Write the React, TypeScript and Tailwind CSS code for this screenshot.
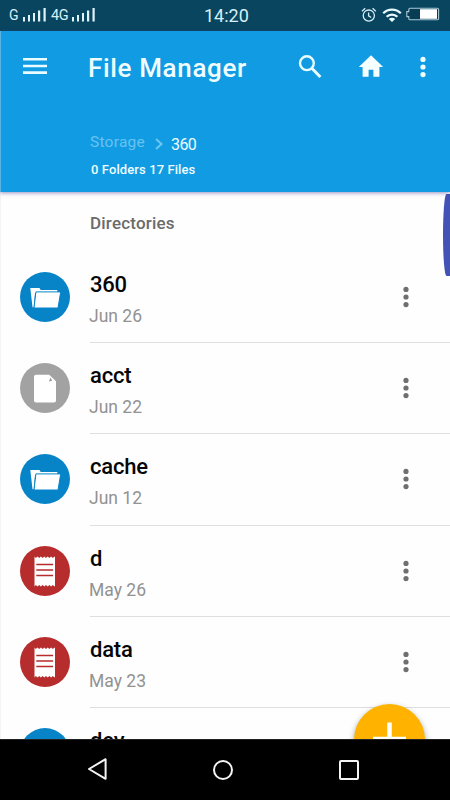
type Kind = 'folder' | 'file' | 'note';

const entries: { name: string; date?: string; kind: Kind }[] = [
  { name: '360', date: 'Jun 26', kind: 'folder' },
  { name: 'acct', date: 'Jun 22', kind: 'file' },
  { name: 'cache', date: 'Jun 12', kind: 'folder' },
  { name: 'd', date: 'May 26', kind: 'note' },
  { name: 'data', date: 'May 23', kind: 'note' },
  { name: 'dev', kind: 'folder' },
];

const circleColor: Record<Kind, string> = {
  folder: 'bg-[#0784c8]',
  file: 'bg-[#a2a2a2]',
  note: 'bg-[#b72d2d]',
};

function Glyph({ kind }: { kind: Kind }) {
  return (
    <svg viewBox="0 0 50 50" className="h-full w-full">
      {kind === 'folder' && (
        <>
          <path d="M10.3 16h9.2l1.2 2h16.6v3H15l-1.3 14.2h-1.2z" fill="#fff" />
          <path d="M15.9 19.9h24.8L38 36H14z" fill="#fff" stroke="#0784c8" strokeWidth="1" />
        </>
      )}
      {kind === 'file' && (
        <>
          <path d="M16 11.8h13.2l6.8 6.4v19.4a2 2 0 0 1-2 2H16a2 2 0 0 1-2-2V13.8a2 2 0 0 1 2-2z" fill="#fff" />
          <path d="M30.4 14.6l1.8 3.2-3.2.6z" fill="#999" />
        </>
      )}
      {kind === 'note' && (
        <>
          <path
            d="M14.5 10.6l1.3 1.3 1.7-1.3 1.7 1.3 1.7-1.3 1.7 1.3 1.7-1.3 1.7 1.3 1.7-1.3 1.7 1.3 1.7-1.3 1.7 1.3 1.7-1.3.5.4v29l-.5.6-1.7-1.6-1.7 1.6-1.7-1.6-1.7 1.6-1.7-1.6-1.7 1.6-1.7-1.6-1.7 1.6-1.7-1.6-1.7 1.6-1.7-1.6-1.3 1.6z"
            fill="#fff"
          />
          <path d="M16.3 18.5h16.8M16.3 24h16.8M16.3 29.5h16.8" stroke="#b72d2d" strokeWidth="1.5" />
        </>
      )}
    </svg>
  );
}

function Dots({ className }: { className: string }) {
  return (
    <svg viewBox="0 0 6 22" className={className} fill="currentColor">
      <circle cx="3" cy="3.4" r="2.6" />
      <circle cx="3" cy="11" r="2.6" />
      <circle cx="3" cy="18.6" r="2.6" />
    </svg>
  );
}

function Signal() {
  return (
    <svg viewBox="0 0 24 15" className="-mt-[3px] h-[15px] w-6" fill="#dff4fa">
      <rect x="0" y="10" width="2" height="4.5" />
      <rect x="5" y="8" width="2" height="6.5" />
      <rect x="10" y="6" width="2" height="8.5" />
      <rect x="15" y="3.5" width="2.2" height="11" />
      <rect x="20.5" y="1" width="2.2" height="13.5" />
    </svg>
  );
}

export default function App() {
  return (
    <div className="relative flex h-[800px] w-[450px] flex-col overflow-hidden bg-[#fefefe] font-['Roboto',sans-serif]">
      <div className="flex h-[31px] shrink-0 items-center bg-[#09455f] text-[#d5f0f8]">
        <div className="flex w-[204px] items-center pl-[9px]">
          <span className="w-[14px] text-[14px]">G</span>
          <Signal />
          <span className="ml-[4px] w-[21px] text-[14.5px] tracking-[-0.5px]">4G</span>
          <Signal />
        </div>
        <span className="w-[157px] -mt-px text-[18px]">14:20</span>
        <svg viewBox="0 0 16 16" className="-mt-[2px] h-4 w-4" fill="none" stroke="#d5f0f8" strokeWidth="1.3">
          <circle cx="7.8" cy="8.6" r="5.6" />
          <path d="M7.6 5.4v3.5l2.6 1.6M1 4.2 4.2 1.2M11.6 1.2l3.2 3" />
        </svg>
        <svg viewBox="0 0 20 14" className="-mt-[2px] ml-[5px] h-[14px] w-5" fill="none" stroke="#e8faff" strokeWidth="2.2">
          <path d="M1.2 5.2a12.4 12.4 0 0 1 17.6 0M4.6 8.8a7.6 7.6 0 0 1 10.8 0" />
          <path d="M10 14 6.8 11a4.6 4.6 0 0 1 6.4 0z" fill="#e8faff" stroke="none" />
        </svg>
        <svg viewBox="0 0 34 14" className="-mt-[3px] ml-1 h-[14px] w-[34px]">
          <path d="M4.2 1.2h27a1.4 1.4 0 0 1 1.4 1.4v8.8a1.4 1.4 0 0 1-1.4 1.4h-27a1.4 1.4 0 0 1-1.4-1.4V9.6H.8V4.6h2V2.6a1.4 1.4 0 0 1 1.4-1.4z" fill="#083b54" stroke="#a9c9d5" strokeWidth="1.1" />
          <rect x="14" y="2.2" width="17" height="9.6" fill="#fff" />
        </svg>
      </div>

      <header className="z-10 h-[161px] shrink-0 border-l border-[#57b4e5] bg-[#109be3] text-[#effdff] shadow-[0_1px_4px_rgba(60,60,150,0.55)]">
        <div className="flex h-[71px] items-center">
          <svg viewBox="0 0 24 18" className="-mt-px ml-[22px] h-[18px] w-6" fill="#e9fcff">
            <path d="M0 1h24v2.6H0zM0 7.7h24v2.6H0zM0 14.3h24v2.6H0z" />
          </svg>
          <h1 className="ml-[41px] w-[210px] pt-[3px] text-[26px] leading-8 font-medium tracking-[0.65px]">File Manager</h1>
          <svg viewBox="0 0 24 24" className="h-6 w-6" fill="none" stroke="#e9fcff" strokeWidth="2.4">
            <circle cx="8.9" cy="8.2" r="6.9" />
            <path d="m13.8 13.2 8.6 8.8" strokeWidth="3" />
          </svg>
          <svg viewBox="0 0 26 22" className="-mt-[2px] ml-[36px] h-[22px] w-[26px]" fill="#f6ffff">
            <path d="M13 .3 25.2 12h-3.8v9.8h-6v-7h-4.8v7h-6V12H.8z" />
          </svg>
          <Dots className="ml-[36px] h-[22px] w-[6px]" />
        </div>
        <div className="mt-[30px] flex h-[22px] items-center pl-[89px]">
          <span className="w-[56px] text-[15.5px] tracking-[0.25px] text-[#68c3f0]">Storage</span>
          <svg viewBox="0 0 8 12" className="mt-px mr-[8px] ml-[9px] h-3 w-2" fill="none" stroke="#6cc8f3" strokeWidth="2">
            <path d="m1 1 5.5 5L1 11" />
          </svg>
          <span className="pt-[3px] text-[16px] tracking-[-0.6px]">360</span>
        </div>
        <p className="mt-[8px] pl-[90px] text-[13px] leading-4 font-medium tracking-[0.1px]">0 Folders 17 Files</p>
      </header>

      <main className="flex h-[547px] shrink-0 flex-col overflow-hidden border-l border-[#f4f4f4]">
        <h2 className="h-[60px] shrink-0 pt-[19px] pl-[89px] text-[17px] leading-6 font-medium tracking-[0.2px] text-[#6b6b6b]">Directories</h2>
        {entries.map((e) => (
          <div key={e.name} className="flex h-[91.2px] shrink-0 pl-[19px]">
            <div className={`mt-5 h-[50px] w-[50px] shrink-0 rounded-full ${circleColor[e.kind]}`}>
              <Glyph kind={e.kind} />
            </div>
            <div className="ml-5 flex flex-1 border-b border-[#dedede]">
              <div className="w-[313px] pt-[19px]">
                <div className="text-[22px] leading-7 font-medium tracking-[-0.2px] text-[#060606]">{e.name}</div>
                {e.date && <div className="mt-[5px] -ml-px text-[17.5px] leading-6 text-[#929292]">{e.date}</div>}
              </div>
              <Dots className="mt-[34px] h-[22px] w-[6px] text-[#6f6f6f]" />
            </div>
          </div>
        ))}
      </main>

      <div className="absolute top-[194px] right-0 h-[82px] w-[7px] rounded-l-[100%] bg-[#4253b5]" />

      <div className="absolute top-[690px] left-[340px] h-[49px] w-[110px] overflow-hidden">
        <div className="mt-[14px] ml-[14px] h-[71px] w-[71px] rounded-full bg-[#ffb300] shadow-[0_3px_6px_rgba(0,0,0,0.4)]">
          <svg viewBox="0 0 71 71" className="h-full w-full" stroke="#fff" strokeWidth="4.5">
            <path d="M35.5 18.5v34M19 35h33" />
          </svg>
        </div>
      </div>

      <nav className="z-10 flex h-[61px] shrink-0 items-center border-t border-[#222] bg-black">
        <svg viewBox="0 0 20 22" className="-mt-[2px] ml-[87px] h-[22px] w-5" fill="none" stroke="#f4f4f4" strokeWidth="2" strokeLinejoin="round">
          <path d="M18.6 1.2v19.6L2 11z" />
        </svg>
        <div className="-mt-px ml-[106px] h-5 w-5 rounded-full border-2 border-[#f4f4f4]" />
        <div className="-mt-px ml-[106px] h-5 w-5 rounded-[2px] border-2 border-[#f4f4f4]" />
      </nav>
    </div>
  );
}
